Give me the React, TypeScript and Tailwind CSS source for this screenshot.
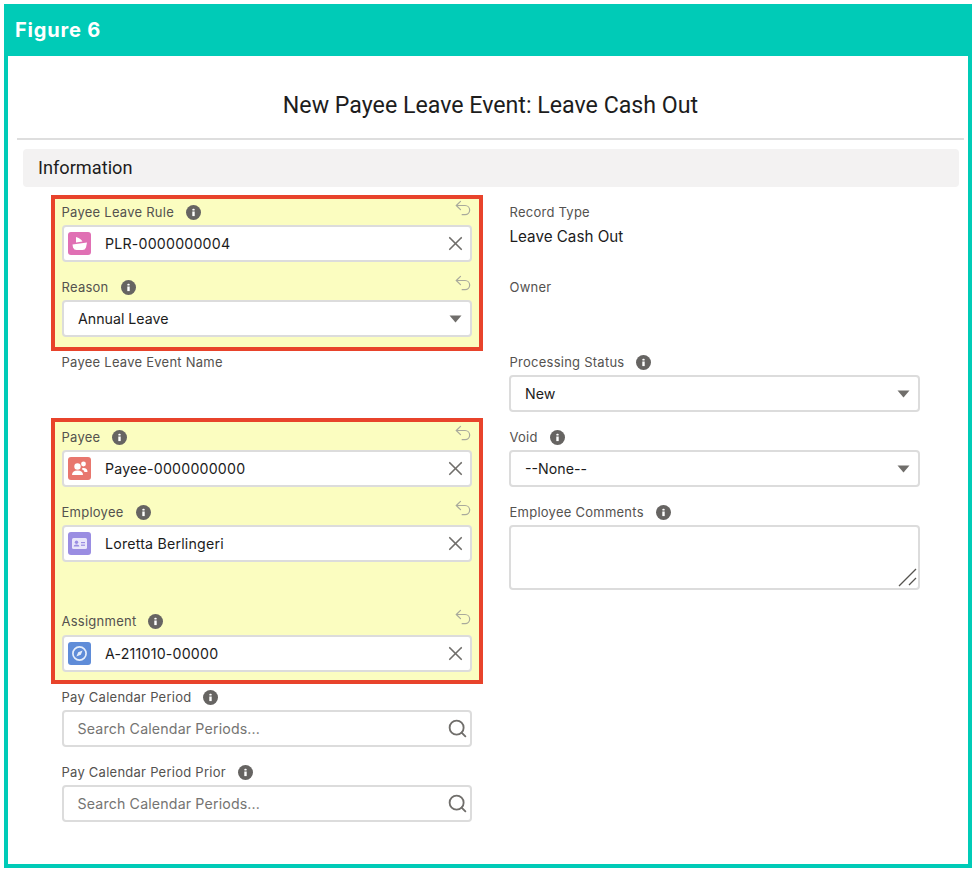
import React from "react";
import { Undo2, X, Search } from "lucide-react";

const Info = () => (
  <svg width="15" height="15" viewBox="0 0 15 15" className="shrink-0">
    <circle cx="7.5" cy="7.5" r="7.5" fill="#666462" />
    <rect x="6.3" y="6.5" width="2.4" height="4.6" fill="#fff" />
    <rect x="6.3" y="3.7" width="2.4" height="1.9" rx="0.9" fill="#fff" />
  </svg>
);

const Label = ({ text, info = true, undo = false, h = "h-[25px]", right = false }: { text: string; info?: boolean; undo?: boolean; h?: string; right?: boolean }) => (
  <div className={`flex items-center justify-between ${h}`}>
    <div className={`${right ? "ml-[0.5px]" : "-ml-[0.5px]"} flex items-center gap-3 text-[13px] leading-none tracking-[0.25px] text-[#54524f]`}>
      <span>{text}</span>
      {info && <Info />}
    </div>
    {undo && <Undo2 size={20} strokeWidth={1.45} className="-mr-[1px] mb-[10px] shrink-0 text-[#a9aa9c]" />}
  </div>
);

const Box = ({ children, cls = "" }: { children: React.ReactNode; cls?: string }) => (
  <div className={`flex h-[37px] items-center rounded-[4px] border-2 border-[#dcdcdc] bg-white text-[14.2px] text-[#1c1c1c] ${cls}`}>
    {children}
  </div>
);

const Caret = () => (
  <svg width="13" height="8" viewBox="0 0 13 8" className="ml-auto mr-[8px] shrink-0">
    <path d="M0.5 0.5 H12.5 L6.5 7.5 Z" fill="#706e6b" />
  </svg>
);

const LookupIcon = ({ bg, children }: { bg: string; children: React.ReactNode }) => (
  <span className={`ml-[4px] mr-[14px] flex h-[23px] w-[23px] shrink-0 items-center justify-center rounded-[3px] ${bg}`}>
    <svg width="23" height="23" viewBox="0 0 23 23">{children}</svg>
  </span>
);

const Lookup = ({ bg, icon, value }: { bg: string; icon: React.ReactNode; value: string }) => (
  <Box>
    <LookupIcon bg={bg}>{icon}</LookupIcon>
    <span className="tracking-[0.2px]">{value}</span>
    <X size={23} strokeWidth={1.75} className="ml-auto mr-[3px] shrink-0 text-[#706e6b]" />
  </Box>
);

const Select = ({ value }: { value: string }) => (
  <Box cls="pl-[14px]">
    <span>{value}</span>
    <Caret />
  </Box>
);

const SearchBox = () => (
  <Box cls="pl-[13.5px] text-[#757472]">
    <span className="tracking-[0.15px]">Search Calendar Periods...</span>
    <Search size={21} strokeWidth={2.1} className="ml-auto mr-[2px] shrink-0 text-[#706e6b]" />
  </Box>
);

const RedBox = ({ children, cls = "" }: { children: React.ReactNode; cls?: string }) => (
  <div className={`border-4 border-[#e8432b] bg-[#fbfdc0] px-[7px] ${cls}`}>{children}</div>
);

export default function App() {
  return (
    <div className="h-[872px] w-[976px] bg-white p-1 font-['Inter','Liberation_Sans',sans-serif]">
      <div className="flex h-[864px] flex-col border-x-4 border-b-4 border-[#00cbb7] bg-white">
        <div className="-mx-1 flex h-[52px] shrink-0 items-center bg-[#00cbb7] pl-[11px] text-[20px] font-bold tracking-[0.8px] text-white">
          Figure 6
        </div>
        <div className="flex h-[82px] shrink-0 items-center justify-center pl-[5px] pt-[17px] font-['Roboto','Inter',sans-serif] text-[23.2px] text-[#1d1d1d]">
          New Payee Leave Event: Leave Cash Out
        </div>
        <div className="ml-[9px] mr-[4px] h-[2px] shrink-0 bg-[#dedede]" />
        <div className="ml-[15px] mr-[9px] mt-[9px] flex h-[38px] shrink-0 items-center rounded-[4px] bg-[#f3f2f2] pb-[1px] pl-[15px] font-['Roboto','Inter',sans-serif] text-[18.2px] text-[#1d1d1d]">
          Information
        </div>
        <div className="ml-[43px] mt-[8px] flex gap-[26px]">
          <div className="w-[432px] shrink-0">
            <RedBox cls="h-[156px] pt-[1px]">
              <Label text="Payee Leave Rule" undo />
              <Lookup
                bg="bg-[#e070b4]"
                value="PLR-0000000004"
                icon={<path d="M4.5 12.5 L19 10.5 L18 15.5 Q17 18 14.5 18 H8.5 Q6 18 5 15.5 Z M8 5 L8 10.5 L14.5 9.5 Q12.5 6 8 5 Z" fill="#fff" />}
              />
              <div className="h-[13px]" />
              <Label text="Reason" undo />
              <Select value="Annual Leave" />
            </RedBox>
            <div className="h-[67px] px-[11px]">
              <Label text="Payee Leave Event Name" info={false} h="h-[22px]" />
            </div>
            <RedBox cls="h-[266px] pt-[3px]">
              <Label text="Payee" undo />
              <Lookup
                bg="bg-[#e8776e]"
                value="Payee-0000000000"
                icon={
                  <>
                    <circle cx="9.5" cy="9.5" r="3.2" fill="#fff" />
                    <path d="M4 18 Q4 13.5 9.5 13.5 Q15 13.5 15 18 Z" fill="#fff" />
                    <circle cx="15.5" cy="7" r="2.4" fill="#fff" />
                    <path d="M14.5 11 Q19.5 10.5 19.5 15 H16.5 Q16 12.8 13.8 12.3 Z" fill="#fff" />
                  </>
                }
              />
              <div className="h-[13px]" />
              <Label text="Employee" undo />
              <Lookup
                bg="bg-[#9a8de2]"
                value="Loretta Berlingeri"
                icon={
                  <>
                    <rect x="4" y="6" width="15" height="11" rx="1.5" fill="#e9e6fa" />
                    <circle cx="8.5" cy="10.2" r="1.7" fill="#9a8de2" />
                    <path d="M5.7 14.5 Q5.7 12.4 8.5 12.4 Q11.3 12.4 11.3 14.5 Z" fill="#9a8de2" />
                    <rect x="13" y="10" width="4" height="1.2" fill="#9a8de2" />
                    <rect x="13" y="12.6" width="4" height="1.2" fill="#9a8de2" />
                  </>
                }
              />
              <div className="h-[46px]" />
              <Label text="Assignment" undo h="h-[27px]" />
              <Lookup
                bg="bg-[#5f8cd8]"
                value="A-211010-00000"
                icon={
                  <>
                    <circle cx="11.5" cy="11.5" r="6.6" fill="none" stroke="#e6eefb" strokeWidth="1.7" />
                    <path d="M14.6 8.4 L12.8 12.8 L8.4 14.6 L10.2 10.2 Z" fill="#e6eefb" />
                  </>
                }
              />
            </RedBox>
            <div className="px-[11px]">
              <Label text="Pay Calendar Period" h="h-[26px]" />
              <SearchBox />
              <div className="h-[13px]" />
              <Label text="Pay Calendar Period Prior" />
              <SearchBox />
            </div>
          </div>
          <div className="w-[411px] pt-[5px]">
            <Label text="Record Type" info={false} right />
            <div className="ml-[0.5px] flex h-[24px] items-center text-[15.2px] text-[#1c1c1c]">Leave Cash Out</div>
            <div className="h-[26px]" />
            <Label text="Owner" info={false} right />
            <div className="h-[50px]" />
            <Label text="Processing Status" right />
            <Select value="New" />
            <div className="h-[13px]" />
            <Label text="Void" right />
            <Select value="--None--" />
            <div className="h-[13px]" />
            <Label text="Employee Comments" right />
            <div className="flex h-[65px] items-end justify-end rounded-[4px] border-2 border-[#dcdcdc] bg-white">
              <svg width="20" height="20" viewBox="0 0 20 20" className="mb-[1px]">
                <path d="M1 19 L18 2 M11 18 L18 11" stroke="#55534f" strokeWidth="1.3" fill="none" />
              </svg>
            </div>
          </div>
        </div>
      </div>
    </div>
  );
}
